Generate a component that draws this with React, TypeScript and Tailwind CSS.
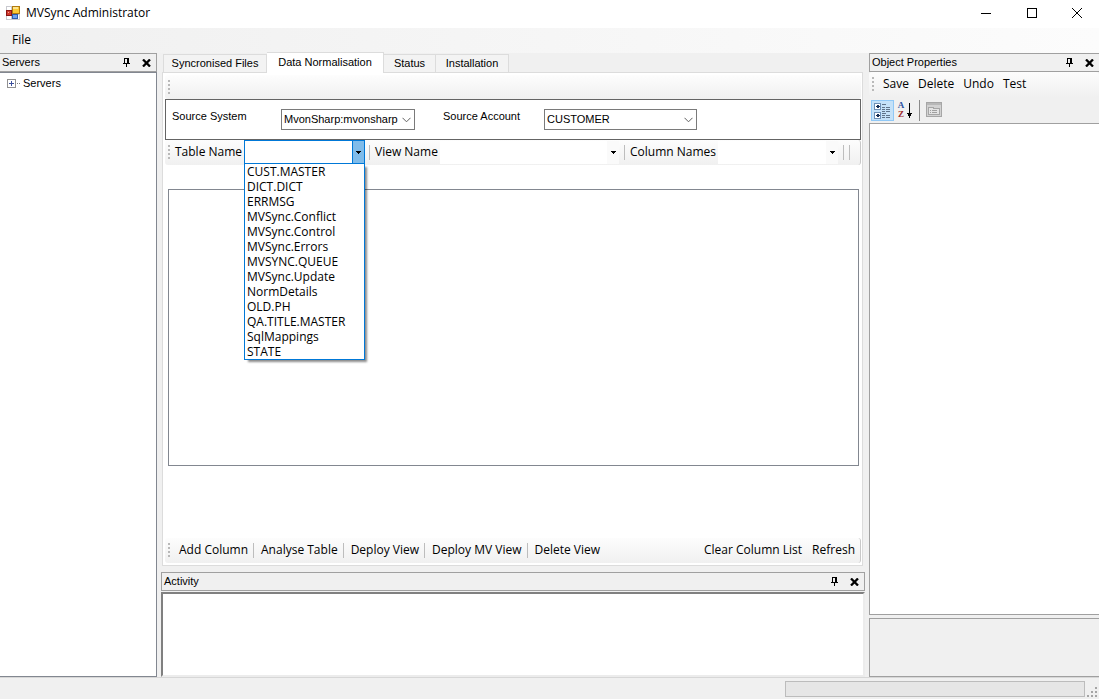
import type { ReactNode } from "react";
import clsx from "clsx";

const tabs = ["Syncronised Files", "Data Normalisation", "Status", "Installation"];
const tabWidths = ["w-[104px]", "w-[117px]", "w-[52px]", "w-[73px]"];

const tables = [
  "CUST.MASTER",
  "DICT.DICT",
  "ERRMSG",
  "MVSync.Conflict",
  "MVSync.Control",
  "MVSync.Errors",
  "MVSYNC.QUEUE",
  "MVSync.Update",
  "NormDetails",
  "OLD.PH",
  "QA.TITLE.MASTER",
  "SqlMappings",
  "STATE",
];

const viewActions = ["Add Column", "Analyse Table", "Deploy View", "Deploy MV View", "Delete View"];

function AppIcon() {
  return (
    <svg width="14" height="14" viewBox="0 0 14 14" shapeRendering="crispEdges">
      <rect x="0" y="0" width="14" height="14" fill="#c9c9cf" />
      <rect x="1" y="1" width="4" height="3" fill="#fff" />
      <rect x="1" y="10" width="4" height="3" fill="#fff" />
      <rect x="12" y="9" width="1" height="4" fill="#fff" />
      <rect x="6" y="0" width="8" height="8" fill="#b07a10" />
      <rect x="7" y="1" width="6" height="6" fill="#fbc936" />
      <rect x="7" y="1" width="5" height="2" fill="#fde58e" />
      <rect x="0" y="4" width="6" height="6" fill="#8c1414" />
      <rect x="1" y="5" width="4" height="4" fill="#cf3a2c" />
      <rect x="2" y="6" width="1" height="1" fill="#f5a79b" />
      <rect x="6" y="8" width="6" height="5" fill="#2c5cae" />
      <rect x="7" y="9" width="4" height="3" fill="#6da2ef" />
    </svg>
  );
}

function PinIcon() {
  return (
    <svg width="7" height="9" viewBox="0 0 7 9" shapeRendering="crispEdges">
      <path d="M1 0h5v5h1v1H4v3H3V6H0V5h1zM2 1v4h2V1z" fill="#000" fillRule="evenodd" />
    </svg>
  );
}

function CloseIcon() {
  return (
    <svg width="9" height="8" viewBox="0 0 9 8">
      <path d="M1 0.5L8 7.5M8 0.5L1 7.5" stroke="#000" strokeWidth="2.3" />
    </svg>
  );
}

function Caret() {
  return (
    <svg width="5" height="3" viewBox="0 0 5 3" shapeRendering="crispEdges">
      <path d="M0 0h5v1H4v1H3v1H2V2H1V1H0z" fill="#000" />
    </svg>
  );
}

function Grip() {
  return (
    <svg width="2" height="14" viewBox="0 0 2 14" shapeRendering="crispEdges" className="shrink-0">
      {[0, 4, 8, 12].map((y) => (
        <rect key={y} x="0" y={y} width="2" height="2" fill="#b9b9b9" />
      ))}
    </svg>
  );
}

function Separator() {
  return <div className="h-[15px] w-px shrink-0 bg-[#bdbdbd]" />;
}

function ToolStrip({ className, children }: { className?: string; children?: ReactNode }) {
  return (
    <div
      className={clsx(
        "flex shrink-0 items-center rounded-[3px] bg-linear-to-b from-[#fdfdfd] to-[#f0f0f0] pb-px pl-[3px]",
        className,
      )}
    >
      <Grip />
      {children}
    </div>
  );
}

function PaneHeader({ title, className }: { title: string; className?: string }) {
  return (
    <div
      className={clsx(
        "flex h-[19px] shrink-0 items-center border border-[#a0a0a0] bg-[#f0f0f0] font-['Liberation_Sans',sans-serif] text-[11px]",
        className,
      )}
    >
      <h2 className="flex-1 pl-[2px]">{title}</h2>
      <button type="button" aria-label={"Pin " + title} className="flex w-5 justify-center">
        <PinIcon />
      </button>
      <button type="button" aria-label={"Close " + title} className="flex w-5 justify-center">
        <CloseIcon />
      </button>
    </div>
  );
}

function ComboBox({ id, value, className }: { id: string; value: string; className?: string }) {
  return (
    <div className={clsx("relative", className)}>
      <select
        id={id}
        className="h-[21px] w-full appearance-none border border-[#7a7a7a] bg-white pl-[2px] outline-none"
      >
        <option>{value}</option>
      </select>
      <svg width="9" height="6" viewBox="0 0 9 6" className="pointer-events-none absolute top-2 right-1">
        <path d="M0.5 0.8L4.5 4.8L8.5 0.8" fill="none" stroke="#606060" />
      </svg>
    </div>
  );
}

function StripCombo({ id, className }: { id: string; className?: string }) {
  return (
    <div className={clsx("relative h-[23px]", className)}>
      <select id={id} className="h-full w-full appearance-none bg-white outline-none">
        <option></option>
      </select>
      <div className="pointer-events-none absolute inset-y-0 right-0 flex w-3 items-center justify-center bg-[#fafafa]">
        <Caret />
      </div>
    </div>
  );
}

function TableCombo() {
  return (
    <div className="relative flex h-6 w-[121px] shrink-0 border border-[#0078d7] bg-white">
      <input id="table" className="w-0 flex-1 px-1 outline-none" />
      <button
        type="button"
        aria-label="Open table list"
        className="flex w-3 items-center justify-center border-l border-[#0078d7] bg-[#80bcea]"
      >
        <Caret />
      </button>
      <ul className="absolute top-[22px] -left-px z-10 w-[121px] border border-[#0078d7] bg-white shadow-[3px_3px_2px_-1px_rgba(0,0,0,0.45)]">
        {tables.map((name) => (
          <li key={name} className="h-[15px] pl-[2px] leading-[15px] whitespace-nowrap">
            {name}
          </li>
        ))}
      </ul>
    </div>
  );
}

function ServersPane() {
  return (
    <aside className="flex w-[157px] shrink-0 flex-col">
      <PaneHeader title="Servers" className="border-l-0" />
      <ul className="flex-1 border-t border-r border-b border-[#828790] bg-white pt-px pl-[7px]">
        <li className="flex h-[18px] items-center font-['Liberation_Sans',sans-serif] text-[11px]">
          <svg width="13" height="9" viewBox="0 0 13 9" shapeRendering="crispEdges">
            <rect x="0.5" y="0.5" width="8" height="8" fill="#fff" stroke="#919191" />
            <path d="M2 4h5v1H2zM4 2h1v5H4z" fill="#3b4f9c" />
            <path d="M10 4h1v1h-1zM12 4h1v1h-1z" fill="#808080" />
          </svg>
          <span className="pl-[3px]">Servers</span>
        </li>
      </ul>
    </aside>
  );
}

function NormalisationPage() {
  return (
    <div className="mr-[2px] ml-px flex flex-1 flex-col border border-[#dcdcdc] bg-white py-[2px] pr-px pl-[2px]">
      <ToolStrip className="h-6" />
      <div className="flex h-[41px] shrink-0 border border-[#646464] font-['Liberation_Sans',sans-serif] text-[11px]">
        <label htmlFor="system" className="w-[115px] pt-[9px] pl-[6px]">
          Source System
        </label>
        <ComboBox id="system" value="MvonSharp:mvonsharp" className="mt-[9px] w-[134px]" />
        <label htmlFor="account" className="ml-7 w-[101px] pt-[9px]">
          Source Account
        </label>
        <ComboBox id="account" value="CUSTOMER" className="mt-[9px] w-[153px]" />
      </div>
      <ToolStrip className="h-[25px] border-r border-[#c8c8c8]">
        <label htmlFor="table" className="w-[74px] shrink-0 pl-[5px] whitespace-nowrap">
          Table Name
        </label>
        <TableCombo />
        <div className="ml-1">
          <Separator />
        </div>
        <label htmlFor="view" className="w-[70px] shrink-0 pl-[5px] whitespace-nowrap">
          View Name
        </label>
        <StripCombo id="view" className="min-w-0 flex-1" />
        <div className="ml-[5px]">
          <Separator />
        </div>
        <label htmlFor="columns" className="w-[93px] shrink-0 pl-[5px] whitespace-nowrap">
          Column Names
        </label>
        <StripCombo id="columns" className="w-[120px] shrink-0" />
        <div className="mr-[10px] ml-[5px] flex gap-[5px]">
          <Separator />
          <Separator />
        </div>
      </ToolStrip>
      <div className="mt-6 mr-[2px] mb-[72px] ml-[3px] flex-1 border border-[#828790] bg-white" />
      <ToolStrip className="h-[25px] border-r border-[#c8c8c8]">
        <div className="flex flex-1 items-center pl-[2px]">
          {viewActions.map((action, i) => (
            <div key={action} className="flex items-center whitespace-nowrap">
              {i > 0 && <Separator />}
              <button type="button" className="pr-[5px] pl-[7px]">
                {action}
              </button>
            </div>
          ))}
        </div>
        <button type="button" className="px-[5px] whitespace-nowrap">
          Clear Column List
        </button>
        <button type="button" className="px-[5px]">
          Refresh
        </button>
      </ToolStrip>
    </div>
  );
}

function Workspace() {
  return (
    <main className="mx-1 flex min-w-0 flex-1 flex-col">
      <div role="tablist" className="-mt-px flex h-5 items-end pl-[2px] font-['Liberation_Sans',sans-serif] text-[11px]">
        {tabs.map((tab, i) => (
          <button
            key={tab}
            type="button"
            role="tab"
            aria-selected={i === 1}
            className={clsx(
              "border-t border-r border-[#dcdcdc] whitespace-nowrap",
              tabWidths[i],
              i === 1 ? "z-10 -mb-px h-[21px] bg-white pb-[2px]" : "h-[18px] bg-[#f3f3f3]",
              i === 0 && "border-l",
            )}
          >
            {tab}
          </button>
        ))}
      </div>
      <NormalisationPage />
      <section className="mt-[6px] flex h-[105px] shrink-0 flex-col">
        <PaneHeader title="Activity" />
        <textarea
          aria-label="Activity"
          className="mt-px flex-1 resize-none border-2 border-t-[#808080] border-r-[#ececec] border-b-[#ececec] border-l-[#808080] bg-white outline-none"
        />
      </section>
    </main>
  );
}

function PropertiesPane() {
  return (
    <aside className="flex w-[230px] shrink-0 flex-col">
      <PaneHeader title="Object Properties" className="border-r-0" />
      <ToolStrip className="h-[25px]">
        <div className="flex gap-[9px] pl-[9px]">
          {["Save", "Delete", "Undo", "Test"].map((action) => (
            <button key={action} type="button">
              {action}
            </button>
          ))}
        </div>
      </ToolStrip>
      <div className="flex h-[26px] shrink-0 items-center pl-[2px]">
        <button
          type="button"
          aria-label="Categorized"
          className="flex h-[21px] w-[23px] items-center justify-center border border-[#90c8f6] bg-[#c4e1f8]"
        >
          <svg width="17" height="17" viewBox="0 0 17 17" shapeRendering="crispEdges">
            <rect x="0.5" y="1.5" width="6" height="6" rx="1" fill="#fff" stroke="#6d8fb5" />
            <rect x="0.5" y="10.5" width="6" height="6" rx="1" fill="#fff" stroke="#6d8fb5" />
            <path d="M2 4h4v1H2zM3 3h2v3H3zM2 13h4v1H2zM3 12h2v3H3z" fill="#152d55" />
            <path
              d="M8 2h4v1H8zM8 5h3v1H8zM12 5h4v1h-4zM8 7h3v1H8zM12 7h4v1h-4zM8 9h3v1H8zM12 9h4v1h-4zM8 11h4v1H8zM8 13h3v1H8zM12 13h4v1h-4zM8 15h3v1H8zM12 15h4v1h-4z"
              fill="#5f7389"
            />
          </svg>
        </button>
        <button type="button" aria-label="Alphabetical" className="flex h-[21px] w-[23px] items-center pl-[3px]">
          <span className="w-2 font-['Liberation_Serif',serif] text-[9px] leading-[9px] font-bold">
            <span className="block text-[#2b4f9e]">A</span>
            <span className="block text-[#a02b2b]">Z</span>
          </span>
          <svg width="5" height="15" viewBox="0 0 5 15" shapeRendering="crispEdges" className="ml-[2px]">
            <path d="M2 0h1v10h2v1H4v2H3v2H2v-2H1v-2H0v-1h2z" fill="#000" />
          </svg>
        </button>
        <div className="ml-[2px] h-[21px] w-px bg-[#8a8a8a]" />
        <button type="button" aria-label="Property Pages" disabled className="ml-[6px]">
          <svg width="16" height="16" viewBox="0 0 16 16" shapeRendering="crispEdges">
            <rect x="0.5" y="0.5" width="15" height="14" fill="#d2d2d2" stroke="#a6a6a6" />
            <rect x="1" y="1" width="14" height="2" fill="#b8b8b8" />
            <path d="M2.5 5.5h5v1h6v6h-11z" fill="#e4e4e4" stroke="#a6a6a6" />
            <path d="M4 8h1v1H4zM6 8h5v1H6zM4 10h1v1H4zM6 10h5v1H6z" fill="#a0a0a0" />
          </svg>
        </button>
      </div>
      <div className="flex-1 border-t border-b border-l border-[#a0a0a0] bg-white" />
      <div className="mt-[3px] h-[59px] shrink-0 border-t border-b border-l border-[#a0a0a0]" />
    </aside>
  );
}

export default function App() {
  return (
    <div className="flex min-h-screen flex-col bg-[#f0f0f0] font-['Open_Sans','Noto_Sans',sans-serif] text-xs text-black">
      <header className="flex h-7 shrink-0 items-center bg-white pb-[2px] pl-[6px]">
        <AppIcon />
        <h1 className="flex-1 pl-[6px]">MVSync Administrator</h1>
        <button type="button" aria-label="Minimize" className="flex w-[46px] justify-center">
          <svg width="10" height="10" viewBox="0 0 10 10" shapeRendering="crispEdges">
            <path d="M0 5h10v1H0z" fill="#000" />
          </svg>
        </button>
        <button type="button" aria-label="Maximize" className="flex w-[46px] justify-center">
          <svg width="10" height="10" viewBox="0 0 10 10" shapeRendering="crispEdges">
            <rect x="0.5" y="0.5" width="9" height="9" fill="none" stroke="#000" />
          </svg>
        </button>
        <button type="button" aria-label="Close" className="flex w-[44px] justify-center">
          <svg width="10" height="10" viewBox="0 0 10 10">
            <path d="M0 0L10 10M10 0L0 10" stroke="#000" />
          </svg>
        </button>
      </header>
      <nav className="flex h-[25px] shrink-0 items-center bg-linear-to-r from-[#f0f0f0] to-[#fcfcfc] pb-px pl-3">
        <button type="button">File</button>
      </nav>
      <div className="flex flex-1">
        <ServersPane />
        <Workspace />
        <PropertiesPane />
      </div>
      <footer className="flex h-[22px] shrink-0 items-center justify-end border-t border-[#d7d7d7]">
        <div role="progressbar" aria-label="Progress" className="h-4 w-[300px] border border-[#bcbcbc] bg-[#e6e6e6]" />
        <svg width="14" height="20" viewBox="0 0 14 20" shapeRendering="crispEdges">
          <path d="M10 8h2v2h-2zM6 12h2v2H6zM10 12h2v2h-2zM2 16h2v2H2zM6 16h2v2H6zM10 16h2v2h-2z" fill="#a5a5a5" />
        </svg>
      </footer>
    </div>
  );
}
